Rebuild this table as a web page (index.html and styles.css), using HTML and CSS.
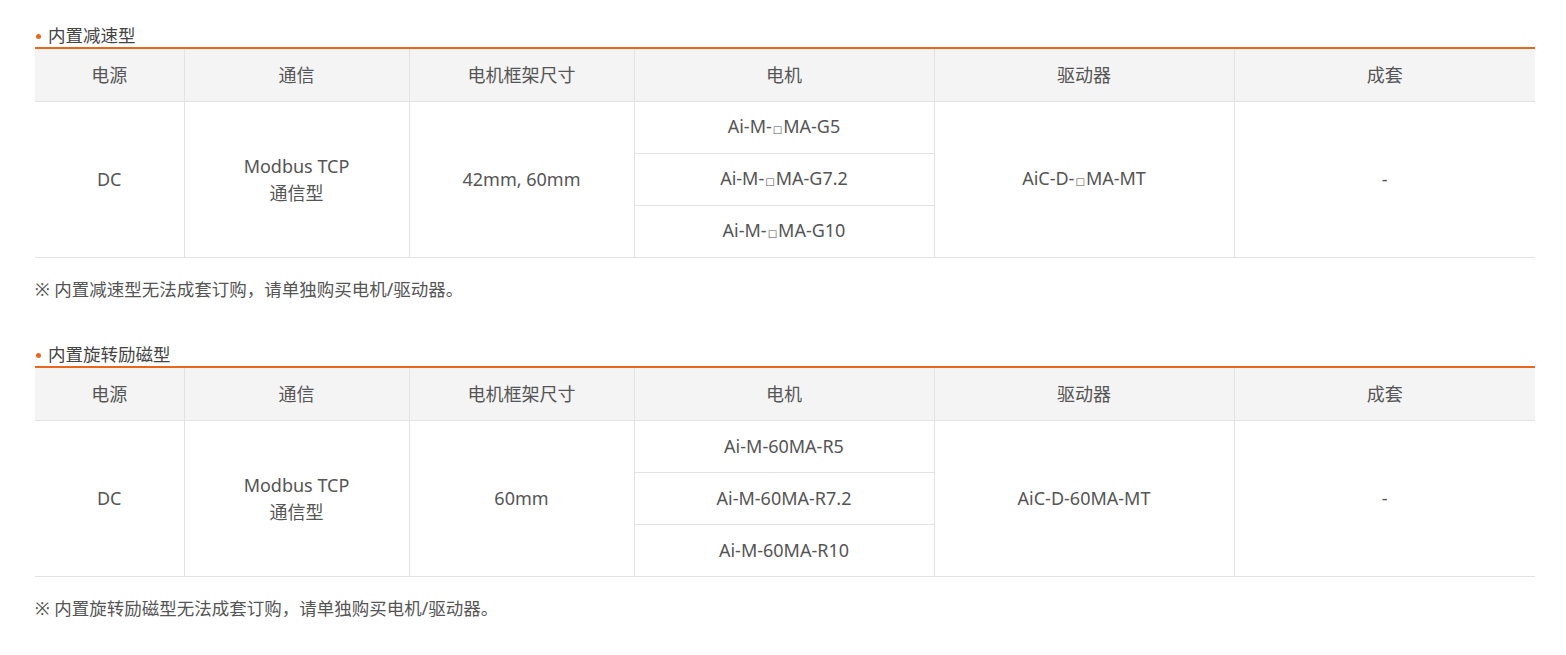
FILE: index.html
```html
<!DOCTYPE html>
<html lang="zh-CN">
<head>
<meta charset="utf-8">
<title>内置型</title>
<link rel="stylesheet" href="styles.css">
</head>
<body>
<div class="page">
  <section class="block">
    <h3 class="title">内置减速型</h3>
    <table class="spec">
      <colgroup>
        <col class="c1"><col class="c2"><col class="c3"><col class="c4"><col class="c5"><col class="c6">
      </colgroup>
      <thead>
        <tr><th>电源</th><th>通信</th><th>电机框架尺寸</th><th>电机</th><th>驱动器</th><th>成套</th></tr>
      </thead>
      <tbody>
        <tr>
          <td rowspan="3">DC</td>
          <td rowspan="3">Modbus TCP<br>通信型</td>
          <td rowspan="3">42mm, 60mm</td>
          <td>Ai-M-<span class="box">□</span>MA-G5</td>
          <td rowspan="3">AiC-D-<span class="box">□</span>MA-MT</td>
          <td rowspan="3" class="last">-</td>
        </tr>
        <tr><td>Ai-M-<span class="box">□</span>MA-G7.2</td></tr>
        <tr><td>Ai-M-<span class="box">□</span>MA-G10</td></tr>
      </tbody>
    </table>
    <p class="note">※ 内置减速型无法成套订购，请单独购买电机/驱动器。</p>
  </section>
  <section class="block second">
    <h3 class="title">内置旋转励磁型</h3>
    <table class="spec">
      <colgroup>
        <col class="c1"><col class="c2"><col class="c3"><col class="c4"><col class="c5"><col class="c6">
      </colgroup>
      <thead>
        <tr><th>电源</th><th>通信</th><th>电机框架尺寸</th><th>电机</th><th>驱动器</th><th>成套</th></tr>
      </thead>
      <tbody>
        <tr>
          <td rowspan="3">DC</td>
          <td rowspan="3">Modbus TCP<br>通信型</td>
          <td rowspan="3">60mm</td>
          <td>Ai-M-60MA-R5</td>
          <td rowspan="3">AiC-D-60MA-MT</td>
          <td rowspan="3" class="last">-</td>
        </tr>
        <tr><td>Ai-M-60MA-R7.2</td></tr>
        <tr><td>Ai-M-60MA-R10</td></tr>
      </tbody>
    </table>
    <p class="note">※ 内置旋转励磁型无法成套订购，请单独购买电机/驱动器。</p>
  </section>
</div>
</body>
</html>
```

FILE: styles.css
```css
html, body {
  margin: 0;
  padding: 0;
  background: #ffffff;
}

body {
  font-family: "Noto Sans", "Noto Sans CJK SC", sans-serif;
  color: #555555;
}

.page {
  padding: 23px 31px 0 35px;
}

.block {
  margin: 0;
}

.block.second {
  margin-top: 41px;
}

.title {
  position: relative;
  margin: 0;
  padding-left: 13px;
  font-size: 17.5px;
  font-weight: normal;
  line-height: 24px;
  height: 24px;
  color: #444444;
}

.title::before {
  content: "";
  position: absolute;
  left: 1px;
  top: 11px;
  width: 5px;
  height: 5px;
  border-radius: 50%;
  background: #e8671c;
}

.spec {
  width: 1500px;
  border-collapse: collapse;
  table-layout: fixed;
  border-top: 2px solid #e8671c;
  font-size: 18px;
}

.c1 { width: 149px; }
.c2 { width: 225px; }
.c3 { width: 225px; }
.c4 { width: 300px; }
.c5 { width: 300px; }
.c6 { width: 301px; }

.spec th,
.spec td {
  padding: 0;
  text-align: center;
  vertical-align: middle;
  border-right: 1px solid #e2e2e2;
  border-bottom: 1px solid #e2e2e2;
  line-height: 27px;
  color: #555555;
}

.spec th {
  height: 52px;
  background: #f4f4f4;
  font-weight: normal;
}

.spec td {
  height: 51px;
}

.spec th:last-child,
.spec td.last {
  border-right: none;
}

.box {
  font-family: "DejaVu Sans", sans-serif;
  font-size: 10px;
  display: inline-block;
  vertical-align: baseline;
  margin: 0 1px;
}

.note {
  margin: 19px 0 0;
  font-size: 17.5px;
  line-height: 24px;
  color: #555555;
}
```
